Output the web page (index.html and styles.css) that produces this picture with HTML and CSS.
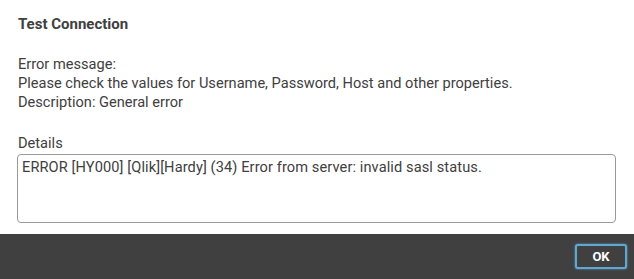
FILE: index.html
```html
<!DOCTYPE html>
<html>
<head>
<meta charset="utf-8">
<link rel="stylesheet" href="styles.css">
</head>
<body>
<div class="dialog">
  <div class="content">
    <h1 class="title">Test Connection</h1>
    <div class="message">
      <div>Error message:</div>
      <div>Please check the values for Username, Password, Host and other properties.</div>
      <div>Description: General error</div>
    </div>
    <div class="details-label">Details</div>
    <div class="details-box">ERROR [HY000] [Qlik][Hardy] (34) Error from server: invalid sasl status.</div>
  </div>
  <div class="footer">
    <button class="ok">OK</button>
  </div>
</div>
</body>
</html>
```
FILE: styles.css
```css
html, body {
  margin: 0;
  padding: 0;
  background: #fff;
}
body {
  font-family: Roboto, "Noto Sans", sans-serif;
  color: #404040;
  font-size: 14.6px;
}
.dialog {
  width: 634px;
  height: 279px;
  display: flex;
  flex-direction: column;
}
.content {
  flex: 1;
  padding: 15px 18px 0 18px;
}
.title {
  margin: 0;
  font-size: 15px;
  font-weight: 700;
  line-height: 18px;
}
.message {
  margin-top: 22px;
  line-height: 19px;
}
.details-label {
  margin-top: 22px;
  line-height: 18px;
}
.details-box {
  box-sizing: border-box;
  margin: 2px 0 0 -1px;
  height: 69px;
  border: 1px solid #999;
  border-radius: 4px;
  padding: 3px 4px;
  line-height: 18px;
  letter-spacing: 0.1px;
}
.footer {
  height: 45px;
  background: #404040;
  display: flex;
  justify-content: flex-end;
  align-items: center;
}
.ok {
  box-sizing: border-box;
  margin-right: 7px;
  width: 52px;
  height: 25px;
  background: #404040;
  color: #fff;
  font-family: Roboto, "Noto Sans", sans-serif;
  font-weight: 700;
  font-size: 13px;
  border: 2px solid #5fa8d3;
  border-radius: 3px;
  box-shadow: 0 0 2px #5fa8d3;
  padding: 0;
}
```
